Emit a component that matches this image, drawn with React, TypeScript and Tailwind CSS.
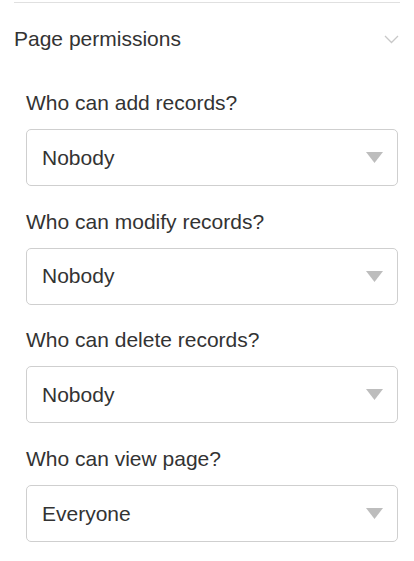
import React from "react";

const fields = [
    { label: "Who can add records?", value: "Nobody" },
    { label: "Who can modify records?", value: "Nobody" },
    { label: "Who can delete records?", value: "Nobody" },
    { label: "Who can view page?", value: "Everyone" },
];

const App = () => {
    return (
        <div className="w-[414px] h-[561px] bg-white text-[#333] overflow-hidden" style={{ fontFamily: '"Liberation Sans", Arial, sans-serif' }}>
            <div className="mx-[14px] mt-[2px] border-t border-[#e0e0e0]"></div>
            <div className="flex items-center justify-between pl-[14px] pr-[15px] mt-[21px] h-[30px]">
                <span className="text-[21px] leading-[30px]">Page permissions</span>
                <svg width="15" height="9" viewBox="0 0 15 9" fill="none">
                    <path d="M1 1l6.5 6.5L14 1" stroke="#c8c8c8" strokeWidth="1.3" />
                </svg>
            </div>
            <div className="pl-[26px] pr-[16px] mt-[37px]">
                {fields.map((f) => (
                    <div key={f.label} className="mb-[23.67px]">
                        <div className="text-[21px] leading-6 mb-[14px]">{f.label}</div>
                        <div className="h-[57px] border border-[#cfcfcf] rounded-[5px] flex items-center justify-between pl-[15px] pr-[14px]">
                            <span className="text-[21px]">{f.value}</span>
                            <svg width="17" height="11" viewBox="0 0 17 11">
                                <path d="M0 0h17L8.5 11z" fill="#bdbdbd" />
                            </svg>
                        </div>
                    </div>
                ))}
            </div>
        </div>
    );
};

export default App;
